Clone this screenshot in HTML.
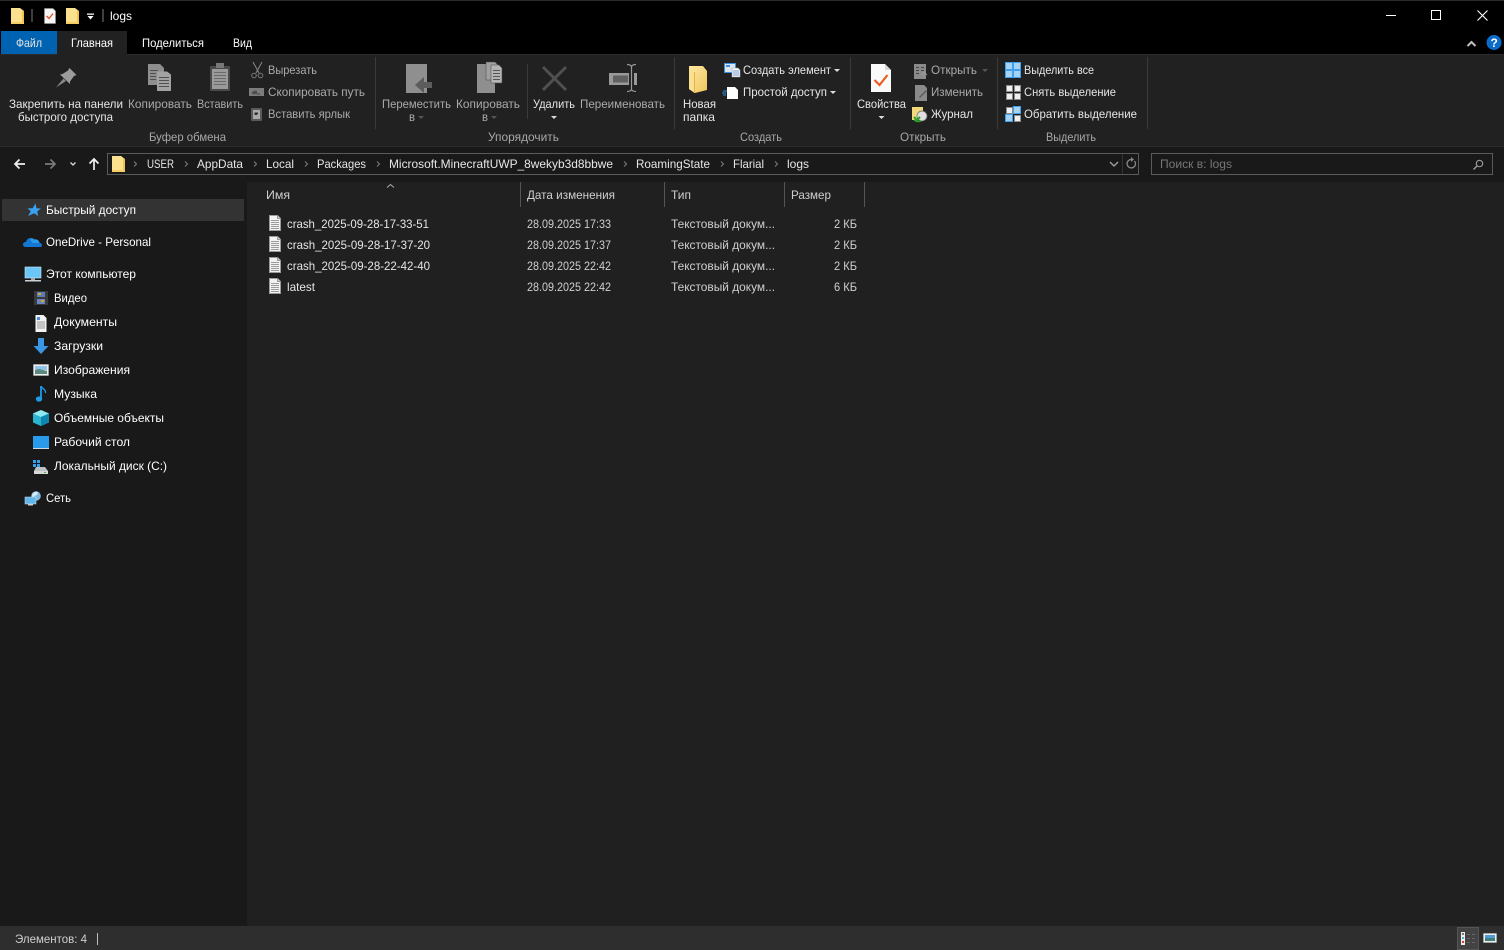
<!DOCTYPE html>
<html><head><meta charset="utf-8"><title>logs</title>
<style>
html,body{margin:0;padding:0;background:#191919;width:1504px;height:950px;overflow:hidden}
svg{display:block}
text{font-family:"Liberation Sans","Noto Sans CJK SC",sans-serif;font-size:12px;fill:#fff}
.g{fill:#aaa}.l{fill:#a8a8a8}.h{fill:#cfcfcf}.p{fill:#777}.t{fill:#e6e6e6}
</style></head><body>
<svg xmlns="http://www.w3.org/2000/svg" width="1504" height="950" viewBox="0 0 1504 950">
<defs>
<linearGradient id="ny" x1="0" y1="0" x2="1" y2="1"><stop offset="0" stop-color="#fde9a4"/><stop offset="1" stop-color="#f0c65c"/></linearGradient>
<g id="doc"><path d="M0.500 .5H8.500L11.500 3.500V15.500H0.500Z" fill="#f2f2f2" stroke="#9a9a9a"/><path d="M8.500 .5V3.500H11.500" fill="#d0d0d0" stroke="#9a9a9a"/><path d="M2 5.500H10M2 7.500H10M2 9.500H10M2 11.500H10M2 13.500H10" stroke="#9c9c9c"/></g>
<g id="folder"><path d="M0 0H9L13 3V16H0Z" fill="#fbe08e"/><path d="M11 2V14H13V3Z" fill="#f1c452"/><path d="M0 14H13V16H0Z" fill="#f4cd63"/></g>
</defs>
<rect width="1504" height="950" fill="#191919"/>
<!-- title -->
<rect width="1504" height="54" fill="#000"/>
<rect x="0" y="0" width="1504" height="1" fill="#2a2a2a"/>
<use href="#folder" x="11" y="8"/>
<rect x="31" y="9" width="2" height="13" fill="#3f3f3f"/>
<path d="M44.500 8.500H53L55.500 11V23.500H44.500Z" fill="#f5f5f5" stroke="#999" stroke-width=".6"/><path d="M46.500 16l2.500 2.500 4-5" stroke="#e2562a" stroke-width="1.400" fill="none"/>
<use href="#folder" x="66" y="8"/>
<path d="M87 13.500h7v1.200h-7zM87.500 16h6l-3 3.500z" fill="#fff"/>
<rect x="102" y="9" width="2" height="13" fill="#3f3f3f"/>
<text x="110" y="20" textLength="22" lengthAdjust="spacingAndGlyphs">logs</text>
<path d="M1386 15.500H1396" stroke="#fff"/>
<rect x="1431.500" y="10.500" width="9" height="9" fill="none" stroke="#fff" stroke-width="1"/>
<path d="M1477.500 10.500L1487.500 20.500M1487.500 10.500L1477.500 20.500" stroke="#fff" stroke-width="1.100"/>
<!-- tabs -->
<rect x="1" y="31" width="56" height="23" fill="#0063b1"/>
<rect x="57" y="31" width="70" height="23" fill="#212121"/>
<text x="16" y="47" textLength="26" lengthAdjust="spacingAndGlyphs" class="t">Файл</text>
<text x="71" y="47" textLength="42" lengthAdjust="spacingAndGlyphs">Главная</text>
<text x="142" y="47" textLength="62" lengthAdjust="spacingAndGlyphs">Поделиться</text>
<text x="233" y="47" textLength="19" lengthAdjust="spacingAndGlyphs">Вид</text>
<path d="M1467.500 46l4-4 4 4" stroke="#c0c0c0" stroke-width="2" fill="none"/>
<circle cx="1494" cy="42.500" r="7.500" fill="#0a6cc8"/>
<text x="1490.500" y="47" style="font-size:12px;font-weight:bold">?</text>
<!-- ribbon -->
<rect x="0" y="54" width="1504" height="92" fill="#212121"/>
<rect x="0" y="54" width="57" height="1" fill="#2b2b2b"/><rect x="127" y="54" width="1377" height="1" fill="#2b2b2b"/>
<rect x="0" y="146" width="1504" height="1" fill="#2b2b2b"/>
<g fill="#3a3a3a">
<rect x="375" y="57" width="1" height="72"/><rect x="674" y="57" width="1" height="72"/><rect x="850" y="57" width="1" height="72"/><rect x="997" y="57" width="1" height="72"/><rect x="1147" y="57" width="1" height="72"/>
<rect x="527" y="64" width="1" height="55"/>
</g>
<!-- pin -->
<path d="M69.500 68L76.500 75L74 76L70 81.500L70 84L60 74.500L62.500 74L68 70.500Z" fill="#9c9c9c"/><path d="M63.500 78.500L56 87.500L66 81Z" fill="#8a8a8a"/>
<!-- copy -->
<path d="M148 64h12l4 4v5h-7v12h-9z" fill="#8f8f8f"/><path d="M157 71.500h10l4 3v16.500h-14z" fill="#a2a2a2"/>
<path d="M150 70.500h8M150 73.500h6M150 76.500h6M150 79.500h6M159 77.500h10M159 80.500h10M159 83.500h10M159 86.500h10" stroke="#505050"/>
<!-- paste -->
<rect x="210" y="66" width="20" height="25" rx="1" fill="#4a4a4a"/><rect x="212" y="69" width="16" height="20" fill="#9a9a9a"/><rect x="216" y="63" width="8" height="5" fill="#777"/>
<path d="M214 72.500h12M214 75.500h12M214 78.500h12M214 81.500h12M214 84.500h12" stroke="#6a6a6a"/>
<!-- scissors -->
<path d="M253 62l6 11M262 62l-6 11" stroke="#888" fill="none"/><circle cx="254" cy="75.500" r="2.300" fill="none" stroke="#777"/><circle cx="260.500" cy="75.500" r="2.300" fill="none" stroke="#777"/>
<rect x="249" y="88" width="15" height="8" fill="#7c7c7c"/><path d="M252 92l1 2 1-3 1 3 1-3 1 3h3" stroke="#333" stroke-width=".7" fill="none"/>
<rect x="251" y="108" width="11" height="13" rx="1" fill="#5a5a5a"/><rect x="253" y="110" width="7" height="9" fill="#aaa"/><path d="M255 115v-2h3M258 113l-2 2" stroke="#333"/>
<!-- move -->
<path d="M406 64h21v29h-21z" fill="#8f8f8f"/><path d="M432 82v6h-8v5l-9-8 9-8v5z" fill="#5c5c5c"/>
<!-- copy to -->
<path d="M477 64h18v29h-18z" fill="#8f8f8f"/><path d="M486 62h9l3 3v15h-12z" fill="#a0a0a0" stroke="#444" stroke-width=".5"/><path d="M491 65h8l3 3v15h-11z" fill="#b4b4b4" stroke="#444" stroke-width=".5"/><path d="M493 70.500h7M493 73.500h7M493 76.500h7M493 79.500h7" stroke="#555"/>
<!-- delete -->
<path d="M543 67l23 23M566 67l-23 23" stroke="#505050" stroke-width="3"/>
<!-- rename -->
<rect x="609" y="73" width="28" height="12" fill="#999"/><rect x="613" y="75.500" width="15" height="7" fill="#606060"/>
<rect x="629" y="66" width="5" height="24" fill="#212121"/>
<path d="M631.500 66v24M627 64.500c3 0 4 1 4.500 2c.5-1 1.500-2 4.500-2M627 91.500c3 0 4-1 4.500-2c.5 1 1.500 2 4.500 2" stroke="#999" stroke-width="1.200" fill="none"/>
<!-- new folder -->
<path d="M689 66h14l4 5v19l-12 3-6-4z" fill="url(#ny)"/><path d="M689 66l5.500 6v21l-5.500-4z" fill="#fbe08e"/><path d="M694.500 72v21" stroke="#e4b44a"/>
<!-- create item -->
<rect x="724.500" y="63.500" width="11" height="9" fill="#dce6f0" stroke="#3c8fd8"/><rect x="726" y="65" width="4" height="2" fill="#3c8fd8"/>
<path d="M732 68h6l2 2v7h-8z" fill="#f4f4f4" stroke="#aaa" stroke-width=".6"/><path d="M733 71h6M733 73h6M733 75h6" stroke="#4a90d8" stroke-width=".8"/>
<path d="M727 87h8l3 3v9h-11z" fill="#fff"/><path d="M723 91h4M722 93h4M723 95h3" stroke="#2d8fe0" stroke-width="1"/>
<path d="M834 69h6l-3 3z" fill="#ddd"/><path d="M830 91h6l-3 3z" fill="#ddd"/>
<!-- properties -->
<path d="M871 64h14l6 6v22h-20z" fill="#fafafa"/><path d="M885 64v6h6z" fill="#d8d8d8"/>
<path d="M874.500 80l5 5 8-10" stroke="#ee5a24" stroke-width="2.200" fill="none"/>
<!-- open -->
<rect x="914" y="64" width="12" height="15" fill="#8a8a8a"/><path d="M916 67.500h3M916 70.500h3M916 73.500h3M921 67.500h3M921 70.500h3" stroke="#444"/><path d="M924 72v5M921 75l3-3 3 3" stroke="#999" fill="none"/>
<path d="M915 85h9l3 3v13h-12z" fill="#8a8a8a"/><path d="M919 97l7-7 1 1-7 7z" fill="#5a5a5a"/>
<rect x="912" y="107" width="11" height="13" fill="#efd97c"/><circle cx="922" cy="116" r="5" fill="#dfdfdf" stroke="#666" stroke-width=".7"/><path d="M914 117l3 3 3-3" stroke="#2ca02c" stroke-width="2" fill="none"/><path d="M914 120a6 4 0 0 0 7 1" stroke="#2ca02c" stroke-width="1.500" fill="none"/>
<!-- select icons -->
<g>
<rect x="1005" y="62" width="16" height="16" fill="#3fa0ee"/><rect x="1006" y="63" width="6" height="6" fill="#a4d3f6"/><rect x="1014" y="63" width="6" height="6" fill="#a4d3f6"/><rect x="1006" y="71" width="6" height="6" fill="#a4d3f6"/><rect x="1014" y="71" width="6" height="6" fill="#a4d3f6"/>
<g fill="#f0f0f0" stroke="#8c8c8c"><rect x="1006.500" y="85.500" width="6" height="6"/><rect x="1014.500" y="85.500" width="6" height="6"/><rect x="1006.500" y="93.500" width="6" height="6"/><rect x="1014.500" y="93.500" width="6" height="6"/>
<rect x="1006.500" y="107.500" width="6" height="6"/><rect x="1014.500" y="115.500" width="6" height="6"/></g>
<g fill="#a4d3f6" stroke="#3fa0ee"><rect x="1013.500" y="106.500" width="7" height="7"/><rect x="1005.500" y="114.500" width="7" height="7"/></g>
</g>
<!-- ribbon text -->
<text x="9" y="108" textLength="114" lengthAdjust="spacingAndGlyphs" class="t">Закрепить на панели</text>
<text x="18" y="121" textLength="95" lengthAdjust="spacingAndGlyphs" class="t">быстрого доступа</text>
<text x="128" y="108" textLength="64" lengthAdjust="spacingAndGlyphs" class="g">Копировать</text>
<text x="197" y="108" textLength="46" lengthAdjust="spacingAndGlyphs" class="g">Вставить</text>
<text x="268" y="74" textLength="49" lengthAdjust="spacingAndGlyphs" class="g">Вырезать</text>
<text x="268" y="96" textLength="97" lengthAdjust="spacingAndGlyphs" class="g">Скопировать путь</text>
<text x="268" y="118" textLength="82" lengthAdjust="spacingAndGlyphs" class="g">Вставить ярлык</text>
<text x="149" y="141" textLength="77" lengthAdjust="spacingAndGlyphs" class="l">Буфер обмена</text>
<text x="382" y="108" textLength="69" lengthAdjust="spacingAndGlyphs" class="g">Переместить</text>
<text x="409" y="121" textLength="6" lengthAdjust="spacingAndGlyphs" class="g">в</text>
<path d="M418 116h6l-3 3z" fill="#555"/>
<text x="456" y="108" textLength="64" lengthAdjust="spacingAndGlyphs" class="g">Копировать</text>
<text x="482" y="121" textLength="6" lengthAdjust="spacingAndGlyphs" class="g">в</text>
<path d="M491 116h6l-3 3z" fill="#555"/>
<text x="533" y="108" textLength="42" lengthAdjust="spacingAndGlyphs" class="t">Удалить</text>
<path d="M551 116h6l-3 3z" fill="#ddd"/>
<text x="580" y="108" textLength="85" lengthAdjust="spacingAndGlyphs" class="g">Переименовать</text>
<text x="488" y="141" textLength="71" lengthAdjust="spacingAndGlyphs" class="l">Упорядочить</text>
<text x="683" y="108" textLength="33" lengthAdjust="spacingAndGlyphs" class="t">Новая</text>
<text x="683" y="121" textLength="32" lengthAdjust="spacingAndGlyphs" class="t">папка</text>
<text x="743" y="74" textLength="88" lengthAdjust="spacingAndGlyphs" class="t">Создать элемент</text>
<text x="743" y="96" textLength="84" lengthAdjust="spacingAndGlyphs" class="t">Простой доступ</text>
<text x="740" y="141" textLength="42" lengthAdjust="spacingAndGlyphs" class="l">Создать</text>
<text x="857" y="108" textLength="49" lengthAdjust="spacingAndGlyphs" class="t">Свойства</text>
<path d="M878.500 116h6l-3 3z" fill="#ddd"/>
<text x="931" y="74" textLength="46" lengthAdjust="spacingAndGlyphs" class="g">Открыть</text>
<path d="M982 69h6l-3 3z" fill="#555"/>
<text x="931" y="96" textLength="52" lengthAdjust="spacingAndGlyphs" class="g">Изменить</text>
<text x="931" y="118" textLength="42" lengthAdjust="spacingAndGlyphs" class="t">Журнал</text>
<text x="900" y="141" textLength="46" lengthAdjust="spacingAndGlyphs" class="l">Открыть</text>
<text x="1024" y="74" textLength="70" lengthAdjust="spacingAndGlyphs" class="t">Выделить все</text>
<text x="1024" y="96" textLength="92" lengthAdjust="spacingAndGlyphs" class="t">Снять выделение</text>
<text x="1024" y="118" textLength="113" lengthAdjust="spacingAndGlyphs" class="t">Обратить выделение</text>
<text x="1046" y="141" textLength="50" lengthAdjust="spacingAndGlyphs" class="l">Выделить</text>
<!-- nav -->
<path d="M25 164H15M19.500 159.500L15 164l4.500 4.500" stroke="#f0f0f0" stroke-width="1.700" fill="none"/>
<path d="M55 164H45M50.500 159.500L55 164l-4.500 4.500" stroke="#7a7a7a" stroke-width="1.700" fill="none"/>
<path d="M70.500 162.500l2.500 2.500 2.500-2.500" stroke="#ddd" stroke-width="1.300" fill="none"/>
<path d="M94 170V159M89.500 163.500L94 159l4.500 4.500" stroke="#f0f0f0" stroke-width="1.700" fill="none"/>
<rect x="107.500" y="153.500" width="1031" height="21" fill="#191919" stroke="#5a5a5a"/>
<rect x="1151.500" y="153.500" width="341" height="21" fill="#191919" stroke="#5a5a5a"/>
<use href="#folder" x="112" y="156"/>
<g fill="none" stroke="#7a7a7a" stroke-width="1.100">
<path d="M134 161.500l2.500 2.500-2.500 2.500M185 161.500l2.500 2.500-2.500 2.500M254 161.500l2.500 2.500-2.500 2.500M305 161.500l2.500 2.500-2.500 2.500M377 161.500l2.500 2.500-2.500 2.500M624 161.500l2.500 2.500-2.500 2.500M721 161.500l2.500 2.500-2.500 2.500M775 161.500l2.500 2.500-2.500 2.500"/>
</g>
<text x="147" y="168" textLength="27" lengthAdjust="spacingAndGlyphs" class="t">USER</text>
<text x="197" y="168" textLength="46" lengthAdjust="spacingAndGlyphs" class="t">AppData</text>
<text x="266" y="168" textLength="28" lengthAdjust="spacingAndGlyphs" class="t">Local</text>
<text x="317" y="168" textLength="49" lengthAdjust="spacingAndGlyphs" class="t">Packages</text>
<text x="389" y="168" textLength="224" lengthAdjust="spacingAndGlyphs" class="t">Microsoft.MinecraftUWP_8wekyb3d8bbwe</text>
<text x="636" y="168" textLength="74" lengthAdjust="spacingAndGlyphs" class="t">RoamingState</text>
<text x="733" y="168" textLength="31" lengthAdjust="spacingAndGlyphs" class="t">Flarial</text>
<text x="787" y="168" textLength="22" lengthAdjust="spacingAndGlyphs" class="t">logs</text>
<path d="M1110 162l4 4 4-4" stroke="#999" stroke-width="1.500" fill="none"/>
<rect x="1122" y="154" width="1" height="20" fill="#333"/>
<path d="M1134.500 161a4.200 4.200 0 1 1-3-1.500" stroke="#888" stroke-width="1.300" fill="none"/><path d="M1131 157v5l3-2.500z" fill="#888"/>
<text x="1160" y="168" textLength="72" lengthAdjust="spacingAndGlyphs" class="p">Поиск в: logs</text>
<circle cx="1479.500" cy="163.500" r="3.200" fill="none" stroke="#999" stroke-width="1.200"/><path d="M1477 166l-3.500 3.500" stroke="#999" stroke-width="1.500"/>
<!-- main -->
<rect x="247" y="182" width="1257" height="744" fill="#202020"/>
<rect x="2" y="199" width="242" height="22" fill="#333"/>
<path d="M387 187.500l3.500-3 3.500 3" stroke="#aaa" fill="none"/>
<g fill="#555"><rect x="520" y="182" width="1" height="25"/><rect x="664" y="182" width="1" height="25"/><rect x="784" y="182" width="1" height="25"/><rect x="864" y="182" width="1" height="25"/></g>
<text x="266" y="199" textLength="24" lengthAdjust="spacingAndGlyphs" class="h">Имя</text>
<text x="527" y="199" textLength="88" lengthAdjust="spacingAndGlyphs" class="h">Дата изменения</text>
<text x="671" y="199" textLength="20" lengthAdjust="spacingAndGlyphs" class="h">Тип</text>
<text x="791" y="199" textLength="40" lengthAdjust="spacingAndGlyphs" class="h">Размер</text>
<!-- rows -->
<use href="#doc" x="269" y="215"/><use href="#doc" x="269" y="236"/><use href="#doc" x="269" y="257"/><use href="#doc" x="269" y="278"/>
<text x="287" y="228" textLength="142" lengthAdjust="spacingAndGlyphs" class="t">crash_2025-09-28-17-33-51</text>
<text x="287" y="249" textLength="143" lengthAdjust="spacingAndGlyphs" class="t">crash_2025-09-28-17-37-20</text>
<text x="287" y="270" textLength="143" lengthAdjust="spacingAndGlyphs" class="t">crash_2025-09-28-22-42-40</text>
<text x="287" y="291" textLength="28" lengthAdjust="spacingAndGlyphs" class="t">latest</text>
<text x="527" y="228" textLength="84" lengthAdjust="spacingAndGlyphs" class="h">28.09.2025 17:33</text>
<text x="527" y="249" textLength="84" lengthAdjust="spacingAndGlyphs" class="h">28.09.2025 17:37</text>
<text x="527" y="270" textLength="84" lengthAdjust="spacingAndGlyphs" class="h">28.09.2025 22:42</text>
<text x="527" y="291" textLength="84" lengthAdjust="spacingAndGlyphs" class="h">28.09.2025 22:42</text>
<text x="671" y="228" textLength="104" lengthAdjust="spacingAndGlyphs" class="h">Текстовый докум...</text>
<text x="671" y="249" textLength="104" lengthAdjust="spacingAndGlyphs" class="h">Текстовый докум...</text>
<text x="671" y="270" textLength="104" lengthAdjust="spacingAndGlyphs" class="h">Текстовый докум...</text>
<text x="671" y="291" textLength="104" lengthAdjust="spacingAndGlyphs" class="h">Текстовый докум...</text>
<text x="834" y="228" textLength="23" lengthAdjust="spacingAndGlyphs" class="h">2 КБ</text>
<text x="834" y="249" textLength="23" lengthAdjust="spacingAndGlyphs" class="h">2 КБ</text>
<text x="834" y="270" textLength="23" lengthAdjust="spacingAndGlyphs" class="h">2 КБ</text>
<text x="834" y="291" textLength="23" lengthAdjust="spacingAndGlyphs" class="h">6 КБ</text>
<!-- sidebar -->
<path d="M35.500 203.500l1 4.700 4.500.3-3.700 2.900.7 4.600-3.700-2.700-6.300 2.700 2.800-4.800-3.300-2.800 5.200-.2z" fill="#3aa0f0"/>
<text x="46" y="214" textLength="90" lengthAdjust="spacingAndGlyphs">Быстрый доступ</text>
<path d="M25 247a2.500 2.500 0 0 1 1-5 5 5 0 0 1 8.500-2.500 4 4 0 0 1 5 3.500 2.200 2.200 0 0 1 1.500 4z" fill="#1477d4"/><path d="M30 239.500a5 5 0 0 1 4.500 0 4 4 0 0 1 5 3.500l-7 0z" fill="#2b9be8"/>
<text x="46" y="246" textLength="105" lengthAdjust="spacingAndGlyphs">OneDrive - Personal</text>
<rect x="25" y="267" width="16" height="11" fill="#6cc6f5" stroke="#c9ecff" stroke-width=".6"/><rect x="31" y="278" width="4" height="2" fill="#aaa"/><rect x="25" y="280" width="16" height="1.500" fill="#c8d0d8"/>
<text x="46" y="278" textLength="90" lengthAdjust="spacingAndGlyphs">Этот компьютер</text>
<rect x="34" y="291" width="14" height="14" fill="#3a3a3a"/><rect x="37" y="292" width="8" height="5" fill="#5b7fb5"/><rect x="37" y="299" width="8" height="5" fill="#6a86c0"/><rect x="38" y="293" width="3" height="2" fill="#d9a437"/><rect x="41" y="300" width="3" height="2" fill="#d9a437"/>
<text x="54" y="302" textLength="33" lengthAdjust="spacingAndGlyphs">Видео</text>
<path d="M35.500 315h8l3 3v14h-11z" fill="#f2f2f2"/><path d="M37 322h8M37 324h8M37 326h8M37 328h8" stroke="#777" stroke-width=".8"/><rect x="37" y="317" width="3" height="3" fill="#4a90d8"/>
<text x="54" y="326" textLength="63" lengthAdjust="spacingAndGlyphs">Документы</text>
<path d="M38 338h6v8h4.500L41 354l-7.500-8H38z" fill="#3a97e6"/>
<text x="54" y="350" textLength="49" lengthAdjust="spacingAndGlyphs">Загрузки</text>
<rect x="33.500" y="364.500" width="15" height="11" fill="#eee" stroke="#c0c0c0" stroke-width=".5"/><rect x="35" y="366" width="12" height="4" fill="#8fc4e8"/><path d="M35 370l4-1 8 2v3H35z" fill="#5c8a80"/>
<text x="54" y="374" textLength="76" lengthAdjust="spacingAndGlyphs">Изображения</text>
<path d="M41 386v12" stroke="#1f9be8" stroke-width="1.800"/><path d="M41 386c1 3 5 3 4.500 7" stroke="#1f9be8" stroke-width="1.300" fill="none"/><ellipse cx="39" cy="399" rx="3.200" ry="2.600" fill="#1f9be8"/>
<text x="54" y="398" textLength="43" lengthAdjust="spacingAndGlyphs">Музыка</text>
<path d="M41 410l8 3.500v9L41 426l-8-3.500v-9z" fill="#29b5cf"/><path d="M33 413.500l8 3.500 8-3.500L41 410z" fill="#8ee8ef"/><path d="M41 417v9l8-3.500v-9z" fill="#0f86b0"/>
<text x="54" y="422" textLength="110" lengthAdjust="spacingAndGlyphs">Объемные объекты</text>
<rect x="33" y="436" width="16" height="12" fill="#2a9bea"/><rect x="33" y="448" width="16" height="1" fill="#cfd8e0"/>
<text x="54" y="446" textLength="76" lengthAdjust="spacingAndGlyphs">Рабочий стол</text>
<rect x="33" y="460" width="3" height="3" fill="#35a0ea"/><rect x="37" y="460" width="3" height="3" fill="#35a0ea"/><rect x="33" y="464" width="3" height="3" fill="#35a0ea"/><rect x="37" y="464" width="3" height="3" fill="#35a0ea"/>
<path d="M36 467h9l3 4H34z" fill="#b9c0c6"/><rect x="34" y="471" width="14" height="3" fill="#d8d8d8"/><rect x="44" y="472" width="2" height="1" fill="#4caf50"/>
<text x="54" y="470" textLength="113" lengthAdjust="spacingAndGlyphs">Локальный диск (C:)</text>
<circle cx="36" cy="496" r="4.800" fill="#7fb6dd"/><path d="M32 496a4.500 4.500 0 0 1 6-4l-1 3-3 1 0 2z" fill="#d8eaf5"/><rect x="25" y="497" width="11" height="7" fill="#62b5e8" stroke="#c9e6f5" stroke-width=".5"/><rect x="28" y="504" width="5" height="1.500" fill="#c8d0d8"/>
<text x="46" y="502" textLength="25" lengthAdjust="spacingAndGlyphs">Сеть</text>
<!-- status -->
<rect x="0" y="926" width="1504" height="24" fill="#2e2e2e"/>
<text x="15" y="943" textLength="72" lengthAdjust="spacingAndGlyphs" class="h">Элементов: 4</text>
<rect x="97" y="933" width="1" height="12" fill="#bdbdbd"/>
<rect x="1457.500" y="927.500" width="21" height="22" fill="#434343" stroke="#555"/>
<rect x="1461" y="932" width="4" height="13" fill="#eee"/><path d="M1467 934.500h3M1472 934.500h3M1467 938.500h3M1472 938.500h3M1467 942.500h3M1472 942.500h3" stroke="#666"/><rect x="1462" y="933" width="2" height="2" fill="#777"/><rect x="1462" y="937" width="2" height="2" fill="#6aa5d8"/><rect x="1462" y="941" width="2" height="2" fill="#c44"/>
<rect x="1483.500" y="933.500" width="13" height="9" fill="#eee" stroke="#bbb" stroke-width=".5"/><rect x="1485" y="935" width="10" height="3" fill="#4d9ad6"/><rect x="1485" y="938" width="10" height="3" fill="#3f7f7a"/>
</svg>
</body></html>
